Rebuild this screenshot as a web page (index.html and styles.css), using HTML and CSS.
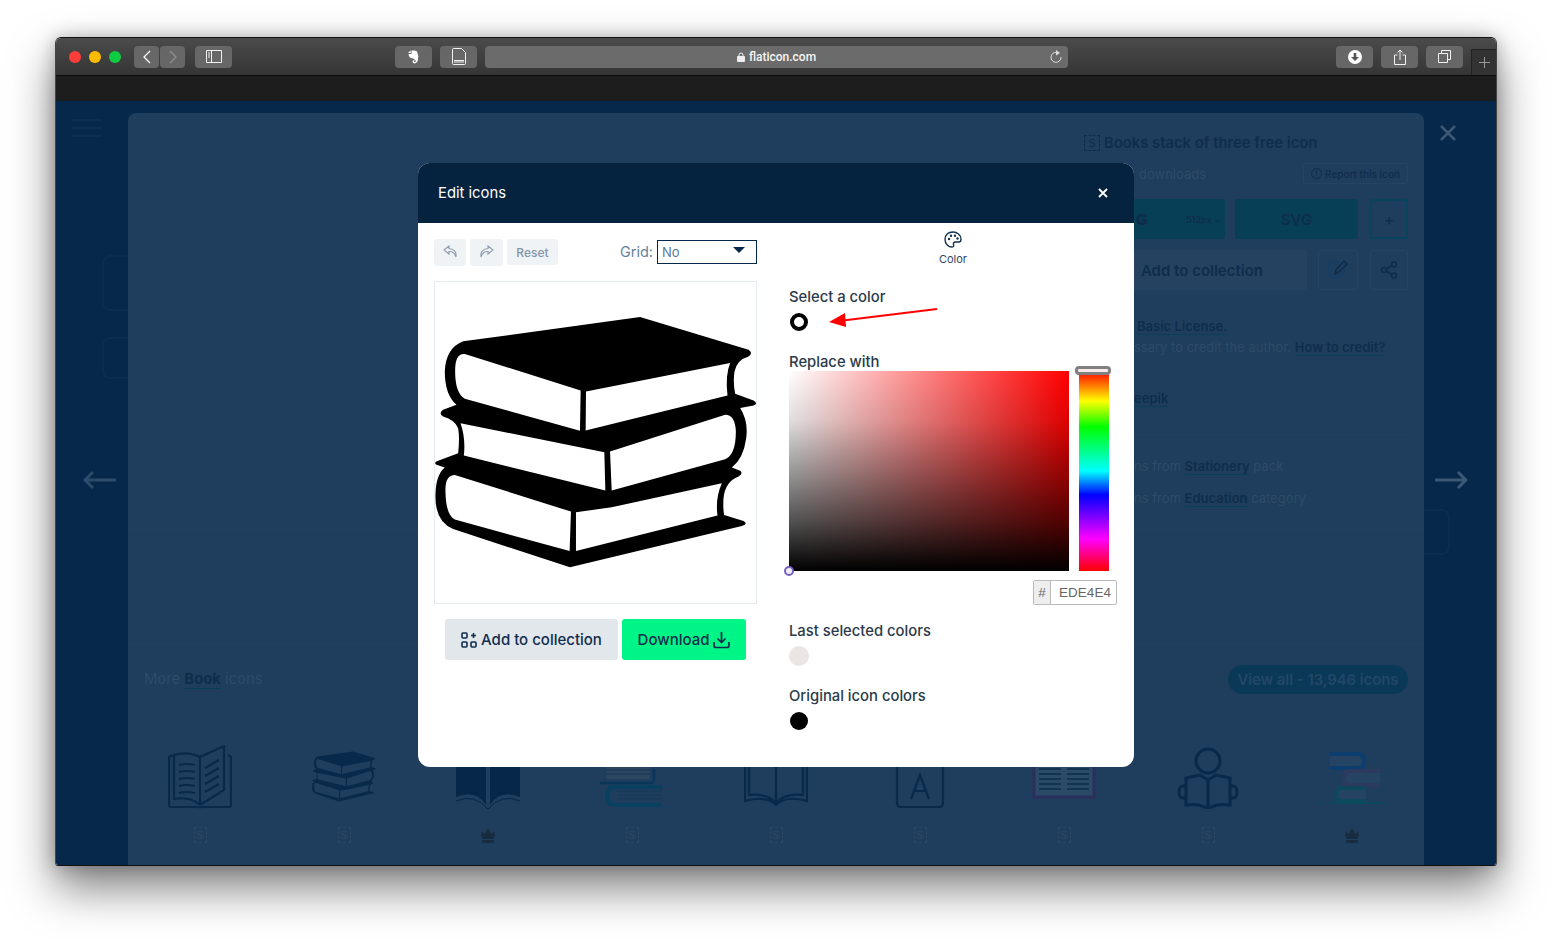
FILE: index.html
```html
<!DOCTYPE html>
<html lang="en">

<head>
    <meta charset="UTF-8">
    <title>flaticon.com</title>
    <link rel="stylesheet" href="styles.css">
</head>

<body>
    <svg class="sprites" width="0" height="0">
        <symbol id="books" viewBox="46 268 961 767">
            <path class="books-cover" d="M130 350L660 277L985 375Q1000 385 985 395Q950 405 943 440Q938 475 945 507L1000 527Q1015 537 1000 542L960 550Q985 590 978 640Q970 700 935 728L960 738Q970 745 955 755Q915 770 910 820Q908 850 912 870L970 888Q985 897 965 903L450 1027L100 912Q45 890 47 810Q48 750 75 728L50 720Q40 712 55 708L115 685Q120 640 115 610Q105 585 70 575Q55 565 70 555L110 540Q75 510 75 440Q78 370 130 350Z" />
            <path class="books-page" d="M135 388Q105 385 106 440Q106 505 135 522L480 618L482 497Z" />
            <path class="books-page" d="M498 500L930 415Q915 450 922 512L497 617Z" />
            <path class="books-page" d="M122 595L553 682L556 797L132 692Q138 640 122 595Z" />
            <path class="books-page" d="M570 680L915 570Q945 570 947 620Q947 690 915 703L575 797Z" />
            <path class="books-page" d="M105 750Q75 750 77 800Q78 870 105 884L449 978L453 860Z" />
            <path class="books-page" d="M468 862L575 847L905 775Q885 820 892 872L468 978Z" />
        </symbol>
    </svg>

    <div class="window">
        <header class="titlebar">
            <span class="light light-red"></span>
            <span class="light light-yellow"></span>
            <span class="light light-green"></span>

            <div class="nav-group">
                <button class="tool tool-nav">
                    <svg width="12" height="16" viewBox="0 0 12 16"><path d="M9 2L3 8l6 6" fill="none" stroke="#fff" stroke-width="1.3" /></svg>
                </button>
                <button class="tool tool-nav">
                    <svg width="12" height="16" viewBox="0 0 12 16"><path d="M3 2l6 6-6 6" fill="none" stroke="#8e8e8e" stroke-width="1.3" /></svg>
                </button>
            </div>
            <button class="tool tool-wide tool-sidebar">
                <svg width="16" height="13" viewBox="0 0 16 13"><path d="M.5.5h15v12H.5zM5.5.5v12M2 3h2M2 5h2M2 7h2" fill="none" stroke="#f2f2f2" /></svg>
            </button>

            <button class="tool tool-wide tool-evernote">
                <svg width="11" height="14" viewBox="0 0 11 14"><path d="M0 3l2.500-2.500L3 3ZM3.500 0.500Q8 0 9 1.500 11 6 10 10q-.5 3-3 3.500-2.500 0-2.500-2 0-1.500 2-1.500L6 12q1.500.5 2-1L5.500 8.500Q1 8.500.5 4h3Z" fill="#fff" /></svg>
            </button>
            <button class="tool tool-wide tool-reader">
                <svg width="14" height="17" viewBox="0 0 14 17"><path d="M.5 1.500q0-1 1-1h8l4 4v11q0 1-1 1h-11q-1 0-1-1z" fill="none" stroke="#f2f2f2" /><path d="M2 12.500h10M2 14h10" stroke="#f2f2f2" /></svg>
            </button>
            <div class="urlbar">
                <span class="url-text">
                    <svg width="8" height="10" viewBox="0 0 8 10"><path d="M2 4.500V3a2 2 0 0 1 4 0v1.500" fill="none" stroke="#eee" /><rect y="4" width="8" height="6" rx="1" fill="#eee" /></svg>
                    flaticon.com
                </span>
                <svg class="url-reload" width="12" height="13" viewBox="0 0 12 13"><path d="M8.500 3A5 5 0 1 0 11 7" fill="none" stroke="#ddd" /><path d="M6 0l4 3-4 2.500z" fill="#ddd" /></svg>
            </div>

            <button class="tool tool-wide tool-downloads">
                <svg width="14" height="14" viewBox="0 0 14 14"><circle cx="7" cy="7" r="7" fill="#fff" /><path d="M5.700 3h2.600v4H11l-4 4-4-4h2.700z" fill="#555" /></svg>
            </button>
            <button class="tool tool-wide tool-share">
                <svg width="12" height="16" viewBox="0 0 12 16"><path d="M3.500 6H.5v9.500h11V6h-3M6 11V1M3.500 3.500L6 1l2.500 2.500" fill="none" stroke="#f2f2f2" /></svg>
            </button>
            <button class="tool tool-wide tool-tabs">
                <svg width="13" height="13" viewBox="0 0 13 13"><path d="M.5 3.500h9v9h-9zM3.500 3V.5h9v9H10" fill="none" stroke="#f2f2f2" /></svg>
            </button>
            <div class="new-tab">
                <svg width="11" height="11" viewBox="0 0 11 11"><path d="M5.500 0v11M0 5.500h11" stroke="#999" /></svg>
            </div>
        </header>
        <div class="bookmarks"></div>

        <div class="page">
            <aside class="gutter">
                <div class="ghost-menu"><span></span><span></span><span></span></div>
                <div class="ghost-thumb ghost-thumb-a"></div>
                <div class="ghost-thumb ghost-thumb-b"></div>
            </aside>

            <main class="panel">
                <section class="detail">
                    <div class="detail-side">
                        <h2 class="detail-title"><span class="badge-s">S</span> Books stack of three free icon</h2>
                        <div class="detail-meta">
                            <span class="faint">downloads</span>
                            <span class="report">
                                <svg width="11" height="11" viewBox="0 0 11 11"><circle cx="5.500" cy="5.500" r="5" fill="none" stroke="#112f4f" /><path d="M5.500 2.500v4M5.500 7.500v1" stroke="#112f4f" /></svg>
                                Report this icon
                            </span>
                        </div>
                        <div class="detail-actions">
                            <span class="ghost-btn ghost-png"><b>G</b><small>512px ⌄</small></span>
                            <span class="ghost-btn ghost-svg">SVG</span>
                            <span class="ghost-btn ghost-plus">+</span>
                        </div>
                        <div class="detail-actions detail-actions-low">
                            <span class="ghost-btn ghost-add">Add to collection</span>
                            <span class="ghost-btn ghost-square">
                                <svg width="22" height="22" viewBox="0 0 22 22"><path d="M17 9a8 8 0 1 1-6-6" fill="none" stroke="#123f66" stroke-width="1.500" /><path d="M8 15l1-4 8-9 3 3-8 8z" fill="none" stroke="#0e2c4c" stroke-width="1.500" /></svg>
                            </span>
                            <span class="ghost-btn ghost-square ghost-share">
                                <svg width="18" height="18" viewBox="0 0 18 18"><circle cx="4" cy="9" r="2.500" fill="none" stroke="#0e2c4c" stroke-width="1.500" /><circle cx="14" cy="3.500" r="2.500" fill="none" stroke="#0e2c4c" stroke-width="1.500" /><circle cx="14" cy="14.500" r="2.500" fill="none" stroke="#0e2c4c" stroke-width="1.500" /><path d="M6 8l6-3.500M6 10l6 3.500" stroke="#0e2c4c" stroke-width="1.500" /></svg>
                            </span>
                        </div>
                        <p class="info info-license"><a>Basic License.</a></p>
                        <p class="info info-credit">ssary to credit the author. <a>How to credit?</a></p>
                        <p class="info info-author"><a>eepik</a></p>
                        <hr class="detail-rule">
                        <p class="info info-pack">ns from <a>Stationery</a> pack</p>
                        <p class="info info-category">ns from <a>Education</a> category</p>
                    </div>
                </section>
                <section class="spacer"></section>
                <section class="more">
                    <h3 class="more-title">More <a>Book</a> icons</h3>
                    <span class="view-all">View all - 13,946 icons</span>
                </section>
                <section class="icon-row">
                    <div class="icon-cell">
                        <svg width="64" height="64" viewBox="0 0 64 64" class="line-icon"><path d="M4 10L1 12v48q0 2 2 2h24q5 0 5 1 0-1 5-1h24q2 0 2-2V12l-3-2M32 60V12L56 1v44L32 60M32 12Q20 6 6 10v44q16-3 26 6M11 20q7-2 16 0M11 27q7-2 16 0M11 34q7-2 16 0M11 41q7-2 16 0M11 48q7-2 16 0M37 23l14-8M37 31l14-8M37 39l14-8M37 47l14-8" /></svg>
                        <span class="badge-s">S</span>
                    </div>
                    <div class="icon-cell">
                        <svg width="64" height="51" class="books-small"><use href="#books" /></svg>
                        <span class="badge-s">S</span>
                    </div>
                    <div class="icon-cell">
                        <svg width="64" height="64" viewBox="0 0 64 64"><path d="M0 0h30v60Q20 44 0 52ZM34 0h30v52Q44 44 34 60Z" fill="#062747" /><path d="M0 56q18-8 32 8 14-16 32-8" fill="none" stroke="#06274a" stroke-width="1" /></svg>
                        <svg class="crown" width="16" height="15" viewBox="0 0 16 15"><path d="M1 3l3.500 3L8 0l3.500 6L15 3l-1 8H2zM2 12h12v3H2z" fill="#172c3e" /></svg>
                    </div>
                    <div class="icon-cell">
                        <svg width="64" height="64" viewBox="0 0 64 64"><path d="M6 17h44v17H6z" fill="#2c4660" /><path d="M6 21h44M6 25h44M6 29h44M17 46h45M17 50h45M17 54h45" stroke="#1a3a58" stroke-width="1.500" /><path d="M0 38h50q4 0 4-4V24" fill="none" stroke="#07365a" stroke-width="2.500" /><path d="M62 42H16q-9 0-9 9t9 9h46" fill="none" stroke="#07415f" stroke-width="4" /></svg>
                        <span class="badge-s">S</span>
                    </div>
                    <div class="icon-cell">
                        <svg width="64" height="64" viewBox="0 0 64 64" class="line-icon"><path d="M1 0v56Q22 50 32 60q10-10 31-4V0M32 0v60M5 0v50q18-2 27 8 9-10 27-8V0" /></svg>
                        <span class="badge-s">S</span>
                    </div>
                    <div class="icon-cell">
                        <svg width="50" height="64" viewBox="0 0 50 64" class="line-icon"><path d="M2 0v58q0 4 4 4h38q4 0 4-4V0M16 54L25 30l9 24M19 46h12" /></svg>
                        <span class="badge-s">S</span>
                    </div>
                    <div class="icon-cell">
                        <svg width="64" height="64" viewBox="0 0 64 64"><path d="M2 0v52h60V0z" fill="#2a4a67" /><path d="M2 0v52h60V0" fill="none" stroke="#2c2f5c" stroke-width="3" /><path d="M7 24h22M7 29h22M7 34h22M7 39h22M7 44h22M35 24h22M35 29h22M35 34h22M35 39h22M35 44h22" stroke="#13344f" stroke-width="2" /></svg>
                        <span class="badge-s">S</span>
                    </div>
                    <div class="icon-cell">
                        <svg width="64" height="64" viewBox="0 0 64 64" class="line-icon line-icon-bold"><circle cx="32" cy="16" r="12" /><path d="M32 35l-8-5-14 3v27q14-2 22 4 8-6 22-4V33l-14-3-8 5v29M10 41H7q-4 0-4 6t4 6h3M54 41h3q4 0 4 6t-4 6h-3" /></svg>
                        <span class="badge-s">S</span>
                    </div>
                    <div class="icon-cell">
                        <svg width="64" height="64" viewBox="0 0 64 64"><path d="M10 9h34v14H10zM24 26h36v14H24zM16 42h30v14H16z" fill="#254464" /><path d="M10 9h28q6 0 6 7t-6 7H10" fill="none" stroke="#0b3d6e" stroke-width="4" /><path d="M60 26H30q-6 0-6 7t6 7h30" fill="none" stroke="#2c3a5f" stroke-width="4" /><path d="M46 43H22q-6 0-6 6.500t6 6.500h24" fill="none" stroke="#0a4a5c" stroke-width="3.500" /><path d="M0 58h4M10 58h54" stroke="#0a4a5c" stroke-width="2" /></svg>
                        <svg class="crown" width="16" height="15" viewBox="0 0 16 15"><path d="M1 3l3.500 3L8 0l3.500 6L15 3l-1 8H2zM2 12h12v3H2z" fill="#172c3e" /></svg>
                    </div>
                </section>
            </main>

            <aside class="gutter gutter-right">
                <div class="ghost-thumb ghost-thumb-c"></div>
            </aside>

            <svg class="page-arrow page-arrow-left" width="34" height="20" viewBox="0 0 34 20"><path d="M33 10H2M10 2l-8 8 8 8" fill="none" stroke="#2e4c6b" stroke-width="3" /></svg>
            <svg class="page-arrow page-arrow-right" width="34" height="20" viewBox="0 0 34 20"><path d="M1 10h31M24 2l8 8-8 8" fill="none" stroke="#3b5877" stroke-width="3" /></svg>
            <svg class="page-close" width="16" height="16" viewBox="0 0 16 16"><path d="M1 1l14 14M15 1L1 15" stroke="#3b5877" stroke-width="2.500" /></svg>

            <div class="modal">
                <div class="modal-header">
                    <span>Edit icons</span>
                    <svg width="10" height="10" viewBox="0 0 10 10"><path d="M1 1l8 8M9 1L1 9" stroke="#fff" stroke-width="1.800" /></svg>
                </div>
                <div class="modal-body">
                    <div class="editor">
                        <div class="toolbar">
                            <button class="edit-btn">
                                <svg width="14" height="13" viewBox="0 0 14 13"><path d="M6 1L1 5l5 4V6.500q5-.5 7 5.500 1-7.500-7-8.500zM6 1" fill="none" stroke="#8d9db0" stroke-width="1.100" /></svg>
                            </button>
                            <button class="edit-btn edit-redo">
                                <svg width="14" height="13" viewBox="0 0 14 13"><path d="M8 1l5 4-5 4V6.500Q3 6 1 12 0 4.500 8 3.500z" fill="none" stroke="#8d9db0" stroke-width="1.100" /></svg>
                            </button>
                            <button class="edit-btn edit-reset">Reset</button>
                            <label class="grid-label">Grid:</label>
                            <div class="grid-select"><span>No</span><i class="caret"></i></div>
                        </div>
                        <div class="preview">
                            <svg class="preview-books" width="321" height="256"><use href="#books" /></svg>
                        </div>
                        <div class="editor-actions">
                            <button class="action action-collection">
                                <svg width="16" height="16" viewBox="0 0 16 16"><g fill="none" stroke="#112d4e" stroke-width="1.600"><rect x="1" y="1" width="5" height="5" rx="1" /><rect x="1" y="10" width="5" height="5" rx="1" /><rect x="10" y="10" width="5" height="5" rx="1" /><path d="M12.500 1v5M10 3.500h5" /></g></svg>
                                Add to collection
                            </button>
                            <button class="action action-download">
                                Download
                                <svg width="17" height="18" viewBox="0 0 17 18"><path d="M8.500 1v10M4.500 7.500l4 4 4-4M1 11v3.500q0 2 2 2h11q2 0 2-2V11" fill="none" stroke="#112d4e" stroke-width="1.700" /></svg>
                            </button>
                        </div>
                    </div>

                    <div class="colors">
                        <div class="color-tab">
                            <svg width="18" height="17" viewBox="0 0 18 17"><path d="M9 1C4 1 1 4 1 8.500S4.500 16 8 16c2 0 2-1.500 1.500-2.500S9.500 11 11.500 11H15c1.500 0 2-1.500 2-3C17 4 13 1 9 1z" fill="none" stroke="#12304f" stroke-width="1.400" /><circle cx="5" cy="8" r="1.200" fill="#12304f" /><circle cx="7" cy="4.800" r="1.200" fill="#12304f" /><circle cx="11" cy="4.800" r="1.200" fill="#12304f" /><circle cx="13.500" cy="7.500" r="1.200" fill="#12304f" /></svg>
                            <span>Color</span>
                        </div>

                        <h4 class="color-label color-label-select">Select a color</h4>
                        <div class="select-row">
                            <span class="swatch swatch-ring"></span>
                            <svg class="select-arrow" width="110" height="20" viewBox="0 0 110 20"><path d="M108 2L14 13.500" stroke="#f00" stroke-width="2.200" /><path d="M0 15L16 6l1 14z" fill="#f00" /></svg>
                        </div>

                        <h4 class="color-label color-label-replace">Replace with</h4>
                        <div class="picker">
                            <div class="picker-square"><span class="picker-dot"></span></div>
                            <div class="picker-hue"><span class="picker-handle"></span></div>
                        </div>
                        <div class="hex-row">
                            <div class="hex-input"><span class="hex-hash">#</span><span class="hex-value">EDE4E4</span></div>
                        </div>

                        <h4 class="color-label color-label-last">Last selected colors</h4>
                        <span class="swatch swatch-last"></span>

                        <h4 class="color-label color-label-original">Original icon colors</h4>
                        <span class="swatch swatch-original"></span>
                    </div>
                </div>
            </div>
        </div>
    </div>
</body>

</html>
```

FILE: styles.css
```css
* {
    box-sizing: border-box;
}

html, body {
    height: 100%;
}

body {
    margin: 0;
    padding: 37px 55px 0;
    background-color: #fff;
    font-family: Inter, "Liberation Sans", sans-serif;
    overflow: hidden;
}

.sprites {
    position: absolute;
}

.books-cover {
    fill: var(--cover, #000);
}

.books-page {
    fill: var(--page, #fff);
}

/* browser window */
.window {
    width: 1442px;
    height: 829px;
    display: flex;
    flex-direction: column;
    border: 1px solid #111;
    border-left-color: #444;
    border-right-color: #444;
    border-radius: 6px 6px 3px 3px;
    box-shadow: 0 22px 45px rgba(0, 0, 0, 0.5), 0 0 18px rgba(0, 0, 0, 0.25);
    overflow: hidden;
}

.titlebar {
    height: 38px;
    flex-shrink: 0;
    display: flex;
    align-items: center;
    padding-left: 13px;
    background: linear-gradient(#4b4b4b, #353535);
    border-bottom: 1px solid #0c0c0c;
}

.light {
    width: 12px;
    height: 12px;
    border-radius: 50%;
    margin-right: 8px;
}

.light-red {
    background-color: #fc3d39;
}

.light-yellow {
    background-color: #fdbc00;
}

.light-green {
    background-color: #0ecc42;
    margin-right: 0;
}

.tool {
    height: 22px;
    border: none;
    padding: 0;
    display: flex;
    align-items: center;
    justify-content: center;
    background-color: #676767;
    border-radius: 4px;
}

.nav-group {
    display: flex;
    gap: 1px;
    margin-left: 13px;
}

.tool-nav {
    width: 25px;
}

.tool-wide {
    width: 37px;
}

.tool-sidebar {
    margin-left: 10px;
}

.tool-evernote {
    margin-left: 163px;
}

.tool-reader {
    margin-left: 8px;
}

.urlbar {
    width: 583px;
    height: 22px;
    margin-left: 8px;
    display: flex;
    align-items: center;
    justify-content: center;
    position: relative;
    background-color: #6b6b6b;
    border-radius: 4px;
}

.url-text {
    display: flex;
    align-items: center;
    gap: 4px;
    color: #f5f5f5;
    font-size: 12px;
    font-weight: 500;
    font-family: Roboto, sans-serif;
}

.url-reload {
    position: absolute;
    right: 6px;
    top: 4px;
}

.tool-downloads {
    margin-left: 268px;
}

.tool-share,
.tool-tabs {
    margin-left: 8px;
}

.new-tab {
    width: 25px;
    height: 26px;
    margin-left: 8px;
    align-self: flex-end;
    display: flex;
    align-items: center;
    justify-content: center;
    background-color: #333;
    border: 1px solid #222;
    border-bottom: none;
    border-right: none;
}

.bookmarks {
    height: 25px;
    flex-shrink: 0;
    background-color: #1d1d1d;
}

/* dimmed site behind the modal */
.page {
    flex: 1;
    display: flex;
    position: relative;
    background-color: #06284a;
    overflow: hidden;
}

.gutter {
    width: 72px;
    flex-shrink: 0;
    overflow: hidden;
}

.ghost-menu {
    display: flex;
    flex-direction: column;
    gap: 6px;
    width: 30px;
    margin: 18px 0 0 16px;
}

.ghost-menu span {
    height: 2px;
    background-color: #0d2f50;
}

.ghost-thumb {
    width: 60px;
    border: 2px solid #0b2d4e;
    border-radius: 8px;
    margin-left: 46px;
}

.ghost-thumb-a {
    height: 56px;
    margin-top: 118px;
}

.ghost-thumb-b {
    height: 42px;
    margin-top: 26px;
}

.ghost-thumb-c {
    height: 46px;
    margin: 408px 0 0 -34px;
}

.panel {
    width: 1296px;
    flex-shrink: 0;
    margin-top: 12px;
    display: flex;
    flex-direction: column;
    background-color: #1f3d5c;
    border-radius: 8px 8px 0 0;
    color: #0e2d4d;
}

.detail {
    height: 417px;
    flex-shrink: 0;
    display: flex;
    justify-content: flex-end;
    padding: 21px 16px 0 0;
    border-bottom: 1px solid #223f5e;
}

.detail-side {
    width: 324px;
}

.detail-title {
    margin: 0;
    height: 18px;
    display: flex;
    align-items: center;
    gap: 4px;
    font-size: 14.800px;
    font-weight: 600;
    white-space: nowrap;
}

.badge-s {
    width: 16px;
    height: 16px;
    display: flex;
    align-items: center;
    justify-content: center;
    border: 1px dashed #0e2d4d;
    font-size: 10px;
    font-weight: 400;
}

.detail-meta {
    display: flex;
    justify-content: space-between;
    align-items: center;
    margin-top: 11px;
    padding-left: 55px;
}

.faint {
    color: #2d4b6a;
    font-size: 13px;
}

.report {
    width: 105px;
    height: 21px;
    display: flex;
    align-items: center;
    justify-content: center;
    gap: 3px;
    border: 1px solid #264462;
    border-radius: 3px;
    font-size: 10px;
    font-weight: 500;
    white-space: nowrap;
}

.detail-actions {
    display: flex;
    gap: 10px;
    margin-top: 15px;
}

.detail-actions-low {
    gap: 11px;
    margin-top: 11px;
}

.ghost-btn {
    height: 40px;
    display: flex;
    align-items: center;
    justify-content: center;
    border-radius: 3px;
    font-size: 15px;
    font-weight: 600;
}

.ghost-png {
    width: 141px;
    justify-content: space-between;
    padding: 0 4px 0 52px;
    background-color: #063f56;
}

.ghost-png small {
    font-size: 9px;
    color: #0e2d4d;
}

.ghost-svg {
    width: 123px;
    background-color: #063f56;
}

.ghost-plus {
    width: 38px;
    margin-left: 2px;
    border: 2px solid #07455e;
}

.ghost-add {
    width: 223px;
    justify-content: flex-end;
    padding-right: 44px;
    background-color: #254360;
}

.ghost-square {
    width: 40px;
    border: 1px solid #264462;
}

.ghost-share {
    width: 38px;
    margin-left: 1px;
}

.info {
    margin: 0;
    height: 21px;
    line-height: 21px;
    font-size: 13px;
    color: #2d4b6a;
    white-space: nowrap;
}

.info a {
    color: #0e2d4d;
    font-weight: 600;
    border-bottom: 1px solid #063f56;
}

.info-license {
    margin-top: 26px;
    padding-left: 53px;
}

.info-credit {
    padding-left: 50px;
}

.info-author {
    margin-top: 30px;
    padding-left: 50px;
}

.info-pack {
    margin-top: 21px;
    padding-left: 50px;
}

.info-category {
    margin-top: 11px;
    padding-left: 50px;
}

.detail-rule {
    margin: 25px 0 0 -30px;
    border: none;
    border-top: 1px solid #233f5e;
}

.spacer {
    height: 115px;
    flex-shrink: 0;
    border-bottom: 1px solid #223f5e;
}

.more {
    height: 49px;
    flex-shrink: 0;
    display: flex;
    align-items: flex-end;
    justify-content: space-between;
    padding: 0 16px;
}

.more-title {
    margin: 0 0 6px;
    font-size: 14.800px;
    font-weight: 400;
    color: #2d4b6a;
}

.more-title a {
    color: #0e2d4d;
    font-weight: 700;
    border-bottom: 1px solid #063f56;
}

.view-all {
    width: 180px;
    height: 29px;
    display: flex;
    align-items: center;
    justify-content: center;
    background-color: #0a3957;
    border-radius: 15px;
    color: #234768;
    font-size: 14.800px;
    font-weight: 600;
}

.icon-row {
    display: grid;
    grid-template-columns: repeat(9, 144px);
    margin-top: 51px;
}

.icon-cell {
    height: 106px;
    display: flex;
    flex-direction: column;
    align-items: center;
    justify-content: space-between;
}

.line-icon {
    fill: none;
    stroke: #08294a;
    stroke-width: 2.200;
}

.line-icon-bold {
    stroke-width: 3;
}

.books-small {
    --cover: #08294a;
    --page: #1f3d5c;
    margin: 6px 0 7px;
}

.icon-cell .badge-s {
    width: 13px;
    height: 16px;
    border-color: #2b4966;
    color: #2b4966;
    margin-bottom: 8px;
}

.crown {
    margin-bottom: 8px;
}

.page-arrow {
    position: absolute;
    top: 369px;
}

.page-arrow-left {
    left: 27px;
}

.page-arrow-right {
    right: 28px;
}

.page-close {
    position: absolute;
    top: 24px;
    right: 40px;
}

/* edit icons dialog */
.modal {
    position: absolute;
    top: 62px;
    left: 362px;
    width: 716px;
    height: 604px;
    background-color: #fff;
    border-radius: 12px;
    overflow: hidden;
}

.modal-header {
    height: 60px;
    display: flex;
    align-items: center;
    justify-content: space-between;
    padding: 0 26px 0 20px;
    background-color: #05233f;
    color: #fff;
    font-size: 14.800px;
}

.modal-body {
    display: flex;
    gap: 32px;
    padding: 8px 17px 0 16px;
}

.editor {
    width: 323px;
}

.toolbar {
    display: flex;
    align-items: flex-start;
    height: 50px;
    padding-top: 8px;
}

.edit-btn {
    width: 32px;
    height: 27px;
    margin-right: 4px;
    padding: 0;
    border: none;
    border-radius: 3px;
    background-color: #f0f3f6;
}

.edit-redo {
    width: 33px;
}

.edit-reset {
    width: 51px;
    height: 26px;
    font-family: Inter, sans-serif;
    font-size: 12px;
    font-weight: 500;
    color: #8495a8;
}

.grid-label {
    margin-left: auto;
    margin-right: 4px;
    line-height: 26px;
    font-size: 14.500px;
    color: #688199;
}

.grid-select {
    width: 100px;
    height: 24px;
    margin-top: 1px;
    display: flex;
    align-items: center;
    justify-content: space-between;
    padding: 0 11px 0 4px;
    border: 1px solid #05284a;
    font-size: 13px;
    color: #5a7a98;
}

.caret {
    border-left: 6px solid transparent;
    border-right: 6px solid transparent;
    border-top: 6px solid #05284a;
    margin-top: -4px;
}

.preview {
    height: 323px;
    border: 1px solid #e4eaee;
    padding-top: 32px;
}

.preview-books {
    display: block;
}

.editor-actions {
    display: flex;
    gap: 4px;
    margin: 15px 0 0 11px;
}

.action {
    height: 41px;
    display: flex;
    align-items: center;
    justify-content: center;
    gap: 4px;
    border: none;
    border-radius: 3px;
    font-family: Inter, sans-serif;
    font-size: 15px;
    font-weight: 500;
    color: #112d4e;
}

.action-collection {
    width: 173px;
    background-color: #e1e7eb;
}

.action-download {
    width: 124px;
    background-color: #00f587;
}

.colors {
    width: 328px;
}

.color-tab {
    display: flex;
    flex-direction: column;
    align-items: center;
    gap: 4px;
    height: 46px;
    font-size: 11px;
    color: #33475f;
}

.color-label {
    margin: 0;
    height: 20px;
    line-height: 20px;
    font-size: 14.800px;
    font-weight: 500;
    color: #2a3a49;
}

.color-label-select {
    margin-top: 10px;
}

.select-row {
    display: flex;
    align-items: center;
    height: 24px;
    position: relative;
    margin-top: 3px;
}

.swatch {
    display: block;
    width: 18px;
    height: 18px;
    margin-left: 1px;
    border-radius: 50%;
}

.swatch-ring {
    border: 4px solid #000;
}

.select-arrow {
    position: absolute;
    left: 40px;
    top: -3px;
}

.color-label-replace {
    margin-top: 18px;
}

.picker {
    display: flex;
    gap: 10px;
    height: 200px;
    margin-top: -1px;
}

.picker-square {
    width: 280px;
    position: relative;
    background:
        linear-gradient(to bottom, rgba(0, 0, 0, 0) 0%, rgba(0, 0, 0, 0.13) 25%, rgba(0, 0, 0, 0.4) 50%, rgba(0, 0, 0, 0.68) 75%, #000 100%),
        linear-gradient(to right, #fff, #f00);
}

.picker-dot {
    position: absolute;
    left: -5px;
    bottom: -5px;
    width: 10px;
    height: 10px;
    border: 2.500px solid #7a5fc0;
    border-radius: 50%;
    background-color: #eee;
}

.picker-hue {
    width: 30px;
    position: relative;
    background: linear-gradient(to bottom, #f00 0%, #ff0 15%, #0f0 28%, #0ff 50%, #00f 62%, #f0f 84%, #f00 100%);
}

.picker-handle {
    position: absolute;
    left: -4px;
    top: -5px;
    width: 36px;
    height: 9px;
    border: 3px solid #808080;
    border-radius: 4px;
    background-color: #fbe9e9;
}

.hex-row {
    display: flex;
    justify-content: flex-end;
    margin: 9px 0 0;
}

.hex-input {
    width: 84px;
    height: 25px;
    display: flex;
    border: 1px solid #bbb;
    border-radius: 2px;
    font-family: "Liberation Sans", sans-serif;
    font-size: 13.500px;
    color: #666;
    line-height: 23px;
}

.hex-hash {
    width: 17px;
    text-align: center;
    background-color: #eee;
    border-right: 1px solid #bbb;
}

.hex-value {
    flex: 1;
    padding-left: 3px;
    text-align: center;
}

.color-label-last {
    margin-top: 16px;
}

.swatch-last {
    width: 20px;
    height: 20px;
    margin: 5px 0 0;
    background-color: #ede4e4;
}

.color-label-original {
    margin-top: 20px;
}

.swatch-original {
    margin-top: 6px;
    background-color: #000;
}
```
